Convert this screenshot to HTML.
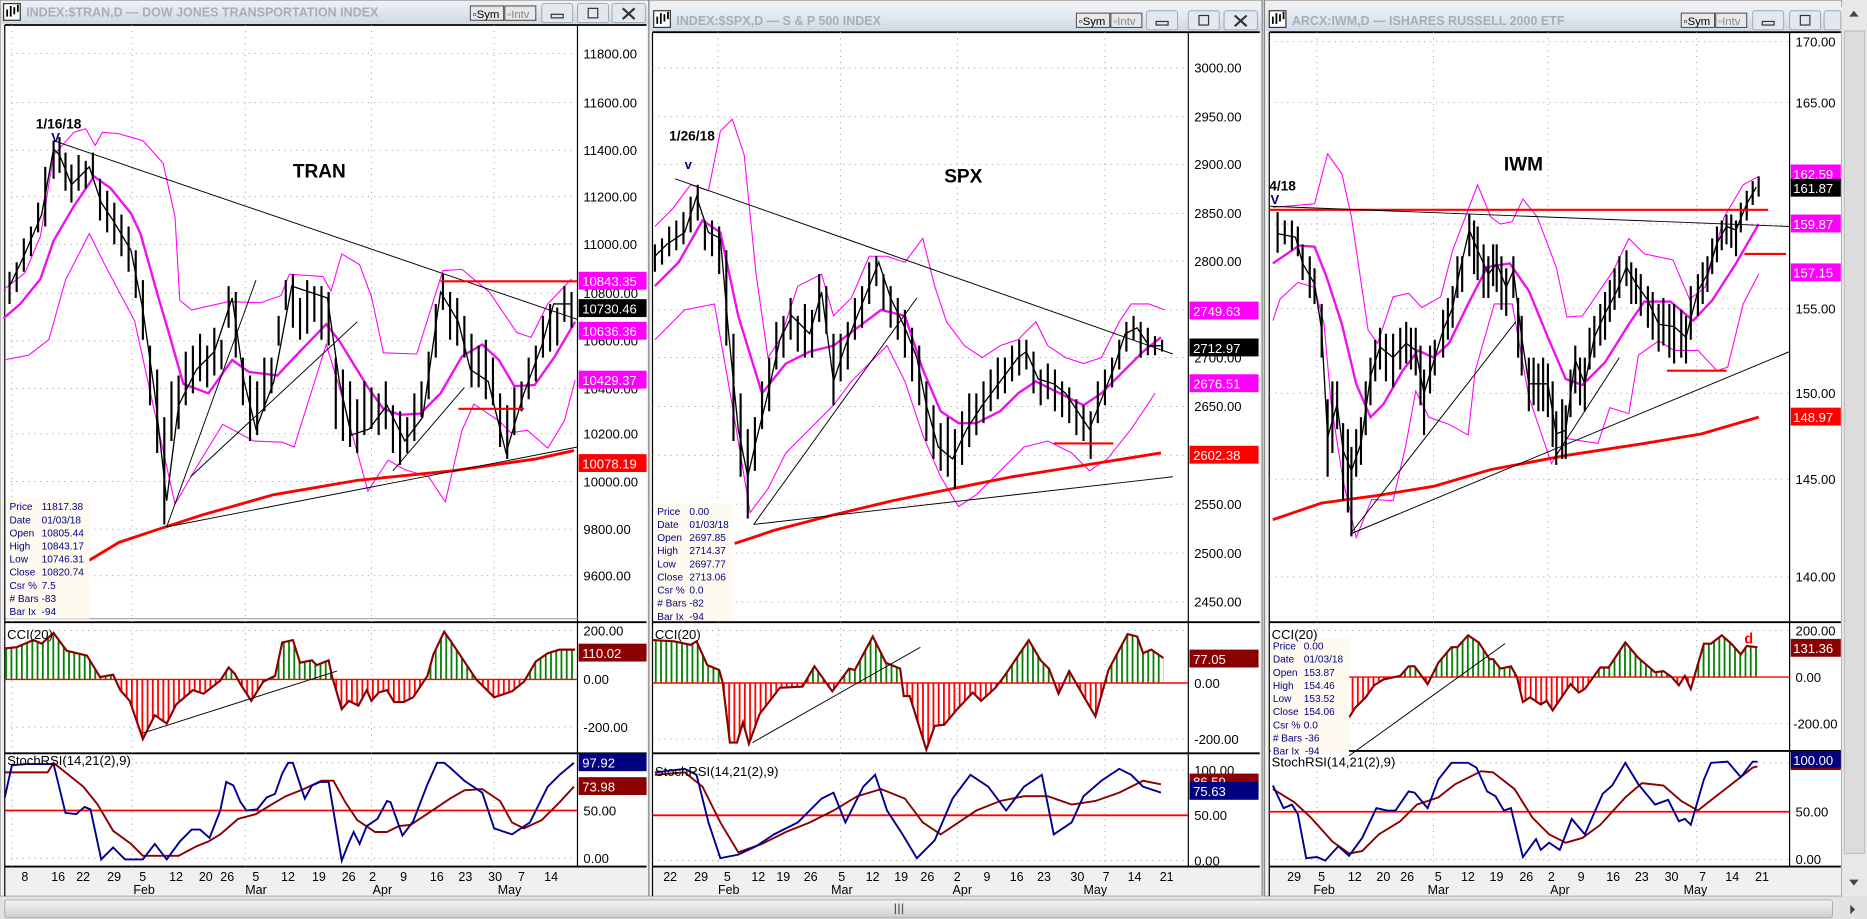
<!DOCTYPE html>
<html><head><meta charset="utf-8"><style>
html,body{margin:0;padding:0;background:#d4d0c8;overflow:hidden}
svg{display:block}
text{font-family:"Liberation Sans",sans-serif}
.ax{font-size:11px;fill:#000}
.bx{font-size:11px;fill:#fff}
.dt{font-size:10.5px;fill:#000}
.inf{font-size:8.5px;fill:#000080}
.ttl{font-size:10.5px;fill:#a8aeb6;font-weight:bold}
.grid{stroke:#9a9a9a;stroke-width:.7;stroke-dasharray:1 4;fill:none}
.bar{stroke:#000;stroke-width:1.8;fill:none}
.px{stroke:#000;stroke-width:1.1;fill:none}
.bandt{stroke:#ff00ff;stroke-width:.9;fill:none}
.bandm{stroke:#ee11ee;stroke-width:2;fill:none}
.ma{stroke:#ff0000;stroke-width:2.4;fill:none}
.tl{stroke:#000;stroke-width:.8;fill:none}
.rl{stroke:#ff0000;stroke-width:1.8;fill:none}
.cci{stroke:#8b0000;stroke-width:1.8;fill:none}
.sb{stroke:#000090;stroke-width:1.6;fill:none}
.sr{stroke:#8b0000;stroke-width:1.6;fill:none}
</style></head><body>
<svg width="1867" height="919" viewBox="0 0 1568 771" preserveAspectRatio="none" xmlns="http://www.w3.org/2000/svg">
<defs>
<pattern id="pg" width="4.4" height="10" patternUnits="userSpaceOnUse"><rect x="0" y="0" width="1.5" height="10" fill="#008000"/></pattern>
<pattern id="pr" width="4.4" height="10" patternUnits="userSpaceOnUse"><rect x="0" y="0" width="1.5" height="10" fill="#ff0000"/></pattern>
<linearGradient id="tb" x1="0" y1="0" x2="0" y2="1"><stop offset="0" stop-color="#eef2f7"/><stop offset="1" stop-color="#cfd8e3"/></linearGradient>
<linearGradient id="hs" x1="0" y1="0" x2="0" y2="1"><stop offset="0" stop-color="#f4f4f4"/><stop offset="1" stop-color="#cfcfcf"/></linearGradient>
<clipPath id="a1"><rect x="4" y="524" width="481" height="46"/></clipPath>
<clipPath id="b1"><rect x="4" y="570" width="481" height="62"/></clipPath>
<clipPath id="a2"><rect x="548" y="524" width="450" height="49"/></clipPath>
<clipPath id="b2"><rect x="548" y="573" width="450" height="60"/></clipPath>
<clipPath id="a3"><rect x="1066" y="524" width="437" height="44"/></clipPath>
<clipPath id="b3"><rect x="1066" y="568" width="437" height="62"/></clipPath>
</defs>
<rect x="0" y="0" width="1568" height="771" fill="#d4d0c8"/>

<!-- ============ PANEL 1 ============ -->
<rect x="0" y="0" width="545" height="752" fill="#f0f0f0" stroke="#888" stroke-width="1"/>
<rect x="1" y="1" width="543" height="19" fill="url(#tb)"/>
<rect x="3" y="3" width="14" height="14" fill="#fff" stroke="#333" stroke-width="1"/>
<path d="M6 14V8M9 14V5M12 12V6M15 10V4" stroke="#000" stroke-width="1.5"/>
<text x="22" y="14" class="ttl">INDEX:$TRAN,D — DOW JONES TRANSPORTATION INDEX</text>
<rect x="395" y="5" width="28" height="12" fill="#e8e8e8" stroke="#444" stroke-width=".8"/><text x="397" y="15" font-size="9.5">▫Sym</text>
<rect x="424" y="5" width="26" height="12" fill="#e8e8e8" stroke="#444" stroke-width=".8"/><text x="426" y="15" font-size="9.5" fill="#888">▫Intv</text>
<rect x="455" y="3" width="26" height="16" fill="#e4e8ee" stroke="#9aa" stroke-width=".8" rx="2"/><rect x="463" y="12" width="10" height="3" fill="none" stroke="#333"/>
<rect x="485" y="3" width="26" height="16" fill="#e4e8ee" stroke="#9aa" stroke-width=".8" rx="2"/><rect x="494" y="7" width="8" height="8" fill="none" stroke="#333"/>
<rect x="514" y="3" width="28" height="16" fill="#e4e8ee" stroke="#9aa" stroke-width=".8" rx="2"/><path d="M523 7L533 16M533 7L523 16" stroke="#333" stroke-width="1.8"/>
<rect x="4" y="21" width="539" height="706" fill="#fff"/>
<line x1="4" y1="21" x2="543" y2="21" stroke="#000" stroke-width="1.5"/>
<line x1="485" y1="21" x2="485" y2="727" stroke="#000" stroke-width="1"/>
<line x1="4" y1="522" x2="543" y2="522" stroke="#000" stroke-width="1.5"/><line x1="4" y1="519" x2="485" y2="519" stroke="#aaa" stroke-width="1"/>
<line x1="4" y1="632" x2="543" y2="632" stroke="#000" stroke-width="1.5"/>
<line x1="4" y1="727" x2="543" y2="727" stroke="#000" stroke-width="1.5"/>
<line x1="4" y1="21" x2="4" y2="752" stroke="#000" stroke-width="1"/>
<g class="grid">
<path d="M4 45H485M4 86H485M4 126H485M4 165H485M4 205H485M4 246H485M4 286H485M4 326H485M4 364H485M4 404H485M4 444H485M4 483H485"/>
<path d="M4 529H485M4 570H485M4 610H485M4 640H485M4 720H485"/>
<path d="M10 21V727M111 21V727M206 21V727M312 21V727M415 21V727"/>
</g>
<g class="ax"><text x="490" y="49">11800.00</text><text x="490" y="90">11600.00</text><text x="490" y="130">11400.00</text><text x="490" y="169">11200.00</text><text x="490" y="209">11000.00</text><text x="490" y="250">10800.00</text><text x="490" y="290">10600.00</text><text x="490" y="330">10400.00</text><text x="490" y="368">10200.00</text><text x="490" y="408">10000.00</text><text x="490" y="448">9800.00</text><text x="490" y="487">9600.00</text></g>
<rect x="486" y="228" width="57" height="15" fill="#ff00ff"/><text x="489" y="240" class="bx">10843.35</text>
<rect x="486" y="251" width="57" height="15" fill="#000"/><text x="489" y="263" class="bx">10730.46</text>
<rect x="486" y="270" width="57" height="15" fill="#ff00ff"/><text x="489" y="282" class="bx">10636.36</text>
<rect x="486" y="311" width="57" height="15" fill="#ff00ff"/><text x="489" y="323" class="bx">10429.37</text>
<rect x="486" y="381" width="57" height="15" fill="#ff0000"/><text x="489" y="393" class="bx">10078.19</text>
<!-- bands -->
<polyline class="bandt" points="3,243 21,229 34,198 45,130 62,111 72,108 80,122 86,111 99,112 120,118 137,137 147,182 151,252 161,260 192,253 219,254 236,248 243,230 271,232 278,244 287,213 302,222 312,249 322,296 350,297 372,227 388,226 411,245 434,279 446,283 460,255 480,234"/>
<polyline class="bandt" points="3,302 24,298 41,285 55,235 75,196 89,224 113,269 137,378 147,423 165,392 187,356 213,370 237,371 247,375 274,289 285,325 309,412 326,386 340,394 360,400 374,421 388,361 398,339 419,353 429,363 443,361 460,376 474,353 483,319"/>
<polyline class="bandm" points="3,267 17,255 34,234 45,202 62,173 79,148 93,158 110,179 118,196 132,246 142,280 154,322 175,330 185,316 195,302 209,312 233,315 247,300 274,272 285,286 309,325 322,343 336,348 353,347 370,330 388,299 405,289 419,302 432,324 449,323 466,299 483,270"/>
<polyline class="ma" points="75,470 100,455 130,445 170,432 230,415 300,403 380,395 450,385 482,378"/>
<!-- price -->
<polyline class="px" points="8,240 20,215 35,180 45,125 50,130 60,155 75,140 85,170 95,185 110,210 120,260 130,330 140,420 150,340 165,310 180,295 195,250 205,320 215,360 230,320 245,240 260,245 275,250 285,320 295,365 310,360 325,340 340,370 355,350 370,245 385,270 395,310 410,320 425,380 440,330 455,290 465,255 480,255"/>
<path class="bar" d="M8 228V255M14 220V245M20 200V228M26 190V215M32 170V195M38 140V190M45 118V150M50 115V145M55 128V160M60 138V170M66 130V160M72 135V158M78 128V150M84 150V185M90 160V195M96 170V205M102 180V215M108 190V228M114 210V250M120 235V285M126 290V340M132 310V380M138 350V440M144 320V370M150 315V360M156 295V340M162 290V330M168 280V320M174 290V325M180 275V315M186 285V310M192 240V275M198 245V300M204 300V340M210 315V370M216 320V365M222 300V345M228 300V330M234 265V290M240 235V260M246 230V275M252 250V285M258 235V280M264 240V270M270 240V285M276 245V290M282 300V360M288 310V370M294 320V375M300 335V380M306 320V365M312 325V360M318 330V365M324 320V360M330 340V380M336 345V390M342 350V380M348 330V370M354 320V350M360 295V335M366 255V300M372 230V260M378 245V285M384 250V290M390 265V300M396 280V325M402 290V325M408 285V335M414 300V340M420 330V375M426 340V385M432 325V365M438 320V345M444 300V335M450 290V320M456 265V300M462 255V295M468 258V290M474 240V270M480 245V275"/>
<!-- trendlines -->
<line class="tl" x1="45" y1="118" x2="485" y2="268"/>
<line class="tl" x1="140" y1="442" x2="485" y2="375"/>
<line class="tl" x1="140" y1="442" x2="215" y2="235"/>
<line class="tl" x1="160" y1="400" x2="300" y2="270"/>
<line class="tl" x1="330" y1="395" x2="390" y2="325"/>
<line class="rl" x1="370" y1="236" x2="485" y2="236"/>
<line class="rl" x1="385" y1="343" x2="440" y2="343"/>
<text x="30" y="108" font-size="11.5" font-weight="bold">1/16/18</text>
<text x="43" y="119" font-size="11" font-weight="bold" fill="#000080">V</text>
<text x="246" y="149" font-size="16" font-weight="bold">TRAN</text>
<rect x="5" y="418" width="70" height="101" fill="#fffaf0"/>
<g class="inf"><text x="8" y="428">Price</text><text x="35" y="428">11817.38</text><text x="8" y="439">Date</text><text x="35" y="439">01/03/18</text><text x="8" y="450">Open</text><text x="35" y="450">10805.44</text><text x="8" y="461">High</text><text x="35" y="461">10843.17</text><text x="8" y="472">Low</text><text x="35" y="472">10746.31</text><text x="8" y="483">Close</text><text x="35" y="483">10820.74</text><text x="8" y="494">Csr %</text><text x="35" y="494">7.5</text><text x="8" y="505">#&#160;Bars -83</text><text x="8" y="516">Bar Ix&#160; -94</text></g>
<!-- CCI 1 -->
<g>
<polygon clip-path="url(#a1)" fill="url(#pg)" points="4,570 4,544 14,543 28,537 35,540 45,531 56,546 73,550 84,568 95,566 101,579 109,588 120,620 130,600 140,607 148,591 162,579 171,582 185,571 192,560 197,565 202,574 211,588 221,572 231,567 237,539 246,537 252,556 262,554 266,558 276,554 279,568 287,595 293,588 301,592 308,579 312,588 318,581 325,579 331,589 339,589 347,585 359,567 364,549 373,530 378,537 390,555 400,570 415,585 430,580 440,572 450,555 460,548 470,545 483,545 483,570"/>
<polygon clip-path="url(#b1)" fill="url(#pr)" points="4,570 4,544 14,543 28,537 35,540 45,531 56,546 73,550 84,568 95,566 101,579 109,588 120,620 130,600 140,607 148,591 162,579 171,582 185,571 192,560 197,565 202,574 211,588 221,572 231,567 237,539 246,537 252,556 262,554 266,558 276,554 279,568 287,595 293,588 301,592 308,579 312,588 318,581 325,579 331,589 339,589 347,585 359,567 364,549 373,530 378,537 390,555 400,570 415,585 430,580 440,572 450,555 460,548 470,545 483,545 483,570"/>
<line x1="4" y1="570" x2="485" y2="570" stroke="#ff0000" stroke-width="1.2"/>
<polyline class="cci" points="4,544 14,543 28,537 35,540 45,531 56,546 73,550 84,568 95,566 101,579 109,588 120,620 130,600 140,607 148,591 162,579 171,582 185,571 192,560 197,565 202,574 211,588 221,572 231,567 237,539 246,537 252,556 262,554 266,558 276,554 279,568 287,595 293,588 301,592 308,579 312,588 318,581 325,579 331,589 339,589 347,585 359,567 364,549 373,530 378,537 390,555 400,570 415,585 430,580 440,572 450,555 460,548 470,545 483,545"/>
<line class="tl" x1="120" y1="615" x2="283" y2="563"/>
</g>
<text x="6" y="536" font-size="11">CCI(20)</text>
<g class="ax"><text x="490" y="533">200.00</text><text x="490" y="574">0.00</text><text x="490" y="614">-200.00</text></g>
<rect x="486" y="540" width="57" height="15" fill="#8b0000"/><text x="489" y="552" class="bx">110.02</text>
<!-- Stoch 1 -->
<line x1="4" y1="680" x2="485" y2="680" stroke="#ff0000" stroke-width="1.5"/>
<polyline class="sr" points="4,648 40,648 45,640 55,648 70,660 82,675 95,697 110,708 120,718 135,718 150,718 165,710 175,706 185,700 200,687 215,683 228,675 240,668 255,662 270,655 280,655 290,673 300,688 315,698 325,698 335,693 345,692 360,682 378,670 390,663 405,662 420,672 430,690 440,695 455,688 470,673 482,660"/>
<polyline class="sb" points="4,669 10,642 22,641 45,641 55,682 64,683 71,677 76,679 85,721 95,711 105,721 120,721 130,708 140,721 151,706 161,696 168,696 176,703 185,680 190,656 196,659 202,673 207,680 216,679 224,669 231,666 237,649 242,640 246,640 256,670 262,659 269,656 276,656 280,680 287,722 293,707 297,698 302,708 308,693 317,687 325,672 328,673 338,701 347,689 359,658 367,640 373,640 378,644 390,655 405,665 415,695 430,700 445,690 460,660 470,650 482,640"/>
<text x="6" y="642" font-size="11">StochRSI(14,21(2),9)</text>
<rect x="486" y="632" width="57" height="15" fill="#000080"/><text x="489" y="644" class="bx">97.92</text>
<rect x="486" y="652" width="57" height="15" fill="#8b0000"/><text x="489" y="664" class="bx">73.98</text>
<g class="ax"><text x="490" y="684">50.00</text><text x="490" y="724">0.00</text></g>
<g class="dt"><text x="18" y="739">8</text><text x="43" y="739">16</text><text x="64" y="739">22</text><text x="90" y="739">29</text><text x="117" y="739">5</text><text x="142" y="739">12</text><text x="167" y="739">20</text><text x="185" y="739">26</text><text x="212" y="739">5</text><text x="236" y="739">12</text><text x="262" y="739">19</text><text x="287" y="739">26</text><text x="310" y="739">2</text><text x="336" y="739">9</text><text x="361" y="739">16</text><text x="385" y="739">23</text><text x="410" y="739">30</text><text x="435" y="739">7</text><text x="457" y="739">14</text>
<text x="112" y="750">Feb</text><text x="206" y="750">Mar</text><text x="313" y="750">Apr</text><text x="418" y="750">May</text></g>

<!-- ============ PANEL 2 ============ -->
<rect x="545" y="0" width="515" height="752" fill="#f0f0f0" stroke="#888" stroke-width="1"/>
<rect x="546" y="6" width="513" height="20" fill="url(#tb)"/>
<rect x="549" y="9" width="14" height="14" fill="#fff" stroke="#333" stroke-width="1"/>
<path d="M552 20V14M555 20V11M558 18V12M561 16V10" stroke="#000" stroke-width="1.5"/>
<text x="568" y="21" class="ttl">INDEX:$SPX,D — S &amp; P 500 INDEX</text>
<rect x="904" y="11" width="28" height="12" fill="#e8e8e8" stroke="#444" stroke-width=".8"/><text x="906" y="21" font-size="9.5">▫Sym</text>
<rect x="933" y="11" width="26" height="12" fill="#e8e8e8" stroke="#444" stroke-width=".8"/><text x="935" y="21" font-size="9.5" fill="#888">▫Intv</text>
<rect x="963" y="9" width="26" height="16" fill="#e4e8ee" stroke="#9aa" stroke-width=".8" rx="2"/><rect x="971" y="18" width="10" height="3" fill="none" stroke="#333"/>
<rect x="998" y="9" width="26" height="16" fill="#e4e8ee" stroke="#9aa" stroke-width=".8" rx="2"/><rect x="1007" y="13" width="8" height="8" fill="none" stroke="#333"/>
<rect x="1028" y="9" width="28" height="16" fill="#e4e8ee" stroke="#9aa" stroke-width=".8" rx="2"/><path d="M1037 13L1047 22M1047 13L1037 22" stroke="#333" stroke-width="1.8"/>
<rect x="548" y="27" width="510" height="700" fill="#fff"/>
<line x1="548" y1="27" x2="1058" y2="27" stroke="#000" stroke-width="1.5"/>
<line x1="998" y1="27" x2="998" y2="727" stroke="#000" stroke-width="1"/>
<line x1="548" y1="522" x2="1058" y2="522" stroke="#000" stroke-width="1.5"/>
<line x1="548" y1="632" x2="1058" y2="632" stroke="#000" stroke-width="1.5"/>
<line x1="548" y1="727" x2="1058" y2="727" stroke="#000" stroke-width="1.5"/>
<line x1="548" y1="27" x2="548" y2="752" stroke="#000" stroke-width="1"/>
<g class="grid">
<path d="M548 57H998M548 98H998M548 138H998M548 179H998M548 219H998M548 260H998M548 300H998M548 341H998M548 382H998M548 423H998M548 464H998M548 505H998"/>
<path d="M548 529H998M548 573H998M548 620H998M548 646H998M548 684H998M548 722H998"/>
<path d="M603 27V727M706 27V727M804 27V727M928 27V727"/>
</g>
<g class="ax"><text x="1003" y="61">3000.00</text><text x="1003" y="102">2950.00</text><text x="1003" y="142">2900.00</text><text x="1003" y="183">2850.00</text><text x="1003" y="223">2800.00</text><text x="1003" y="304">2700.00</text><text x="1003" y="345">2650.00</text><text x="1003" y="427">2550.00</text><text x="1003" y="468">2500.00</text><text x="1003" y="509">2450.00</text></g>
<rect x="999" y="253" width="58" height="15" fill="#ff00ff"/><text x="1002" y="265" class="bx">2749.63</text>
<rect x="999" y="284" width="58" height="15" fill="#000"/><text x="1002" y="296" class="bx">2712.97</text>
<rect x="999" y="314" width="58" height="15" fill="#ff00ff"/><text x="1002" y="326" class="bx">2676.51</text>
<rect x="999" y="374" width="58" height="15" fill="#ff0000"/><text x="1002" y="386" class="bx">2602.38</text>
<polyline class="bandt" points="550,190 565,175 580,155 595,160 605,110 615,100 625,130 635,230 645,300 655,285 670,240 690,230 700,265 715,250 730,215 745,215 760,220 775,200 785,240 795,270 810,290 825,300 840,290 855,285 870,270 880,290 895,300 910,305 925,300 940,270 950,255 965,255 978,260"/>
<polyline class="bandt" points="550,285 575,260 600,255 615,340 630,430 645,410 660,380 680,360 700,340 715,320 730,305 745,290 760,320 775,365 790,400 805,425 820,415 840,395 860,375 880,370 900,380 915,395 930,385 950,360 970,330"/>
<polyline class="bandm" points="550,240 570,220 590,185 605,195 620,265 640,330 660,305 680,295 700,290 720,275 740,260 760,265 775,310 790,345 805,355 820,355 840,345 855,330 870,320 890,330 910,340 925,330 945,310 960,295 975,283"/>
<polyline class="ma" points="617,456 650,445 700,432 750,420 800,410 850,400 900,392 950,384 975,380"/>
<polyline class="px" points="550,215 560,205 575,195 585,165 595,195 605,200 612,280 620,360 628,400 635,370 645,330 655,285 665,265 680,280 690,245 700,320 710,290 720,265 730,240 738,220 748,250 760,275 770,300 778,340 788,375 800,385 812,360 825,340 840,320 855,300 862,295 872,318 885,322 895,330 905,345 915,360 925,335 935,310 945,280 955,275 965,290 975,290"/>
<path class="bar" d="M550 205V228M556 200V222M562 190V215M568 185V210M574 178V205M580 165V195M586 155V185M592 185V210M598 185V215M604 190V230M610 210V290M616 280V370M622 330V400M628 360V435M634 350V395M640 320V360M646 300V345M652 270V310M658 265V300M664 250V285M670 265V295M676 255V300M682 260V300M688 230V270M694 240V280M700 280V340M706 280V320M712 270V310M718 250V285M724 240V275M730 220V255M736 215V240M742 230V260M748 240V275M754 250V285M760 260V300M766 275V320M772 290V340M778 320V370M784 340V385M790 355V395M796 350V400M802 360V410M808 345V390M814 330V375M820 330V365M826 320V355M832 310V345M838 300V335M844 300V330M850 290V320M856 285V315M862 285V310M868 295V330M874 310V340M880 305V335M886 310V345M892 320V350M898 325V355M904 335V365M910 340V370M916 345V385M922 320V355M928 310V340M934 300V325M940 285V310M946 270V295M952 265V285M958 270V300M964 275V298M970 282V298M976 285V295"/>
<line class="tl" x1="567" y1="150" x2="985" y2="297"/>
<line class="tl" x1="633" y1="440" x2="985" y2="400"/>
<line class="tl" x1="633" y1="440" x2="770" y2="250"/>
<line class="rl" x1="885" y1="372" x2="935" y2="372"/>
<text x="562" y="118" font-size="11.5" font-weight="bold">1/26/18</text>
<text x="575" y="142" font-size="11" font-weight="bold" fill="#000080">v</text>
<text x="793" y="153" font-size="16" font-weight="bold">SPX</text>
<rect x="549" y="422" width="66" height="99" fill="#fffaf0"/>
<g class="inf"><text x="552" y="432">Price</text><text x="579" y="432">0.00</text><text x="552" y="443">Date</text><text x="579" y="443">01/03/18</text><text x="552" y="454">Open</text><text x="579" y="454">2697.85</text><text x="552" y="465">High</text><text x="579" y="465">2714.37</text><text x="552" y="476">Low</text><text x="579" y="476">2697.77</text><text x="552" y="487">Close</text><text x="579" y="487">2713.06</text><text x="552" y="498">Csr %</text><text x="579" y="498">0.0</text><text x="552" y="509">#&#160;Bars -82</text><text x="552" y="520">Bar Ix&#160; -94</text></g>
<g>
<polygon clip-path="url(#a2)" fill="url(#pg)" points="548,573 548,537 566,538 580,541 585,538 594,558 604,562 607,573 613,623 619,623 624,606 629,624 638,599 655,577 674,576 684,559 699,580 713,561 718,562 733,534 744,556 756,561 759,584 764,584 778,629 785,609 793,608 803,596 817,581 824,588 836,577 843,568 864,537 874,554 881,561 889,582 898,563 910,584 920,601 931,562 947,532 955,534 960,548 967,545 977,552 977,573"/>
<polygon clip-path="url(#b2)" fill="url(#pr)" points="548,573 548,537 566,538 580,541 585,538 594,558 604,562 607,573 613,623 619,623 624,606 629,624 638,599 655,577 674,576 684,559 699,580 713,561 718,562 733,534 744,556 756,561 759,584 764,584 778,629 785,609 793,608 803,596 817,581 824,588 836,577 843,568 864,537 874,554 881,561 889,582 898,563 910,584 920,601 931,562 947,532 955,534 960,548 967,545 977,552 977,573"/>
<line x1="548" y1="573" x2="998" y2="573" stroke="#ff0000" stroke-width="1.2"/>
<polyline class="cci" points="548,537 566,538 580,541 585,538 594,558 604,562 607,573 613,623 619,623 624,606 629,624 638,599 655,577 674,576 684,559 699,580 713,561 718,562 733,534 744,556 756,561 759,584 764,584 778,629 785,609 793,608 803,596 817,581 824,588 836,577 843,568 864,537 874,554 881,561 889,582 898,563 910,584 920,601 931,562 947,532 955,534 960,548 967,545 977,552"/>
<line class="tl" x1="632" y1="623" x2="773" y2="543"/>
</g>
<text x="550" y="536" font-size="11">CCI(20)</text>
<g class="ax"><text x="1003" y="577">0.00</text><text x="1003" y="624">-200.00</text></g>
<rect x="999" y="545" width="58" height="15" fill="#8b0000"/><text x="1002" y="557" class="bx">77.05</text>
<line x1="548" y1="684" x2="998" y2="684" stroke="#ff0000" stroke-width="1.5"/>
<polyline class="sr" points="550,650 575,648 590,660 605,690 620,715 640,708 660,698 680,690 700,680 720,668 740,662 760,670 775,690 790,700 805,690 820,680 840,672 860,668 880,668 900,675 920,672 940,665 960,655 975,658"/>
<polyline class="sb" points="550,648 575,645 585,650 595,690 605,720 620,717 635,710 650,700 670,690 690,670 700,665 710,690 725,660 735,650 745,680 758,700 770,720 785,705 800,670 815,650 830,660 845,680 860,660 875,650 885,700 900,690 910,668 925,655 940,645 950,650 960,660 975,665"/>
<text x="550" y="651" font-size="11">StochRSI(14,21(2),9)</text>
<text x="1003" y="650" class="ax">100.00</text>
<rect x="999" y="649" width="58" height="13" fill="#8b0000"/><text x="1002" y="660" class="bx">86.59</text>
<rect x="999" y="656" width="58" height="15" fill="#000080"/><text x="1002" y="668" class="bx">75.63</text>
<g class="ax"><text x="1003" y="688">50.00</text><text x="1003" y="726">0.00</text></g>
<g class="dt"><text x="557" y="739">22</text><text x="583" y="739">29</text><text x="608" y="739">5</text><text x="631" y="739">12</text><text x="652" y="739">19</text><text x="675" y="739">26</text><text x="704" y="739">5</text><text x="727" y="739">12</text><text x="751" y="739">19</text><text x="773" y="739">26</text><text x="801" y="739">2</text><text x="826" y="739">9</text><text x="848" y="739">16</text><text x="871" y="739">23</text><text x="899" y="739">30</text><text x="926" y="739">7</text><text x="947" y="739">14</text><text x="974" y="739">21</text>
<text x="603" y="750">Feb</text><text x="698" y="750">Mar</text><text x="800" y="750">Apr</text><text x="910" y="750">May</text></g>

<!-- ============ PANEL 3 ============ -->
<rect x="1062" y="0" width="485" height="752" fill="#f0f0f0" stroke="#888" stroke-width="1"/>
<rect x="1063" y="6" width="484" height="20" fill="url(#tb)"/>
<rect x="1066" y="9" width="14" height="14" fill="#fff" stroke="#333" stroke-width="1"/>
<path d="M1069 20V14M1072 20V11M1075 18V12M1078 16V10" stroke="#000" stroke-width="1.5"/>
<text x="1085" y="21" class="ttl">ARCX:IWM,D — ISHARES RUSSELL 2000 ETF</text>
<rect x="1412" y="11" width="28" height="12" fill="#e8e8e8" stroke="#444" stroke-width=".8"/><text x="1414" y="21" font-size="9.5">▫Sym</text>
<rect x="1441" y="11" width="26" height="12" fill="#e8e8e8" stroke="#444" stroke-width=".8"/><text x="1443" y="21" font-size="9.5" fill="#888">▫Intv</text>
<rect x="1472" y="9" width="26" height="16" fill="#e4e8ee" stroke="#9aa" stroke-width=".8" rx="2"/><rect x="1480" y="18" width="10" height="3" fill="none" stroke="#333"/>
<rect x="1503" y="9" width="26" height="16" fill="#e4e8ee" stroke="#9aa" stroke-width=".8" rx="2"/><rect x="1512" y="13" width="8" height="8" fill="none" stroke="#333"/>
<rect x="1532" y="9" width="14" height="16" fill="#e4e8ee" stroke="#9aa" stroke-width=".8" rx="2"/>
<rect x="1066" y="27" width="480" height="700" fill="#fff"/>
<line x1="1066" y1="27" x2="1546" y2="27" stroke="#000" stroke-width="1.5"/>
<line x1="1503" y1="27" x2="1503" y2="727" stroke="#000" stroke-width="1"/>
<line x1="1066" y1="522" x2="1546" y2="522" stroke="#000" stroke-width="1.5"/>
<line x1="1066" y1="630" x2="1546" y2="630" stroke="#000" stroke-width="1.5"/>
<line x1="1066" y1="727" x2="1546" y2="727" stroke="#000" stroke-width="1.5"/>
<line x1="1066" y1="27" x2="1066" y2="752" stroke="#000" stroke-width="1"/>
<g class="grid">
<path d="M1066 35H1503M1066 86H1503M1066 188H1503M1066 259H1503M1066 330H1503M1066 402H1503M1066 484H1503"/>
<path d="M1066 529H1503M1066 568H1503M1066 607H1503M1066 640H1503M1066 681H1503M1066 721H1503"/>
<path d="M1106 27V727M1204 27V727M1300 27V727M1425 27V727"/>
</g>
<g class="ax"><text x="1508" y="39">170.00</text><text x="1508" y="90">165.00</text><text x="1508" y="263">155.00</text><text x="1508" y="334">150.00</text><text x="1508" y="406">145.00</text><text x="1508" y="488">140.00</text></g>
<rect x="1504" y="138" width="42" height="15" fill="#ff00ff"/><text x="1506" y="150" class="bx">162.59</text>
<rect x="1504" y="150" width="42" height="15" fill="#000"/><text x="1506" y="162" class="bx">161.87</text>
<rect x="1504" y="180" width="42" height="15" fill="#ff00ff"/><text x="1506" y="192" class="bx">159.87</text>
<rect x="1504" y="221" width="42" height="15" fill="#ff00ff"/><text x="1506" y="233" class="bx">157.15</text>
<rect x="1504" y="342" width="42" height="15" fill="#ff0000"/><text x="1506" y="354" class="bx">148.97</text>
<polyline class="bandt" points="1069,174 1104,171 1115,129 1127,146 1135,182 1149,277 1157,288 1170,249 1183,246 1194,258 1210,249 1220,210 1241,155 1252,182 1260,188 1270,186 1279,167 1291,182 1307,224 1316,266 1329,265 1342,246 1355,227 1368,200 1381,213 1405,218 1419,251 1432,241 1448,182 1464,155 1477,148"/>
<polyline class="bandt" points="1069,269 1075,251 1090,237 1104,241 1112,272 1118,339 1128,403 1139,451 1152,419 1170,420 1181,372 1189,328 1200,350 1217,356 1233,365 1239,311 1255,255 1270,255 1284,333 1303,389 1316,368 1342,372 1352,342 1368,347 1376,298 1393,286 1406,294 1426,294 1442,311 1451,308 1464,255 1477,230"/>
<polyline class="bandm" points="1069,221 1091,206 1104,207 1114,232 1127,272 1139,322 1151,350 1162,339 1178,311 1191,294 1204,300 1217,288 1233,255 1249,224 1268,221 1284,244 1300,283 1315,318 1329,323 1348,304 1368,272 1381,253 1403,253 1422,269 1438,252 1458,221 1477,188"/>
<polyline class="ma" points="1069,436 1110,422 1155,416 1204,408 1252,394 1316,382 1381,372 1429,364 1477,350"/>
<polyline class="px" points="1073,196 1088,199 1094,221 1104,238 1110,277 1115,367 1123,339 1128,378 1135,395 1143,372 1151,316 1159,291 1170,300 1181,288 1189,294 1196,330 1205,300 1212,277 1220,258 1226,227 1234,193 1241,210 1250,230 1257,221 1265,241 1271,227 1278,283 1284,322 1292,322 1300,322 1307,364 1315,361 1323,302 1331,322 1339,283 1348,263 1358,244 1366,224 1374,238 1384,252 1393,272 1406,274 1416,283 1426,244 1434,230 1442,204 1450,190 1458,193 1467,171 1475,157"/>
<path class="bar" d="M1073 178V212M1079 185V205M1085 185V210M1090 190V215M1094 205V235M1100 215V250M1104 225V255M1110 255V300M1115 335V400M1119 320V380M1123 320V360M1128 355V420M1132 360V430M1135 375V450M1139 360V400M1143 350V390M1147 320V365M1151 300V340M1155 285V320M1159 275V310M1164 280V320M1170 280V325M1176 275V310M1181 270V305M1185 275V310M1189 275V315M1193 290V340M1196 310V365M1201 290V330M1205 285V315M1212 260V300M1216 250V285M1220 240V275M1224 215V250M1228 215V245M1234 180V215M1238 185V230M1241 190V235M1246 205V250M1250 215V250M1254 205V240M1257 205V245M1261 215V260M1265 225V265M1271 215V250M1275 250V300M1278 265V315M1284 300V345M1288 300V340M1292 305V345M1296 300V345M1300 305V350M1304 320V375M1307 345V390M1312 335V385M1315 340V385M1319 310V350M1323 290V330M1327 300V340M1331 300V345M1335 275V310M1339 265V300M1344 255V290M1348 245V285M1352 235V270M1356 225V260M1360 215V250M1366 210V240M1370 220V255M1374 225V255M1378 230V265M1384 240V275M1388 245V285M1393 255V295M1397 250V290M1402 255V300M1406 255V305M1412 260V300M1416 265V305M1420 240V285M1426 230V265M1430 220V255M1434 215V245M1438 200V230M1442 190V220M1446 185V210M1450 180V205M1454 180V208M1458 185V215M1462 170V195M1467 160V185M1472 152V172M1477 148V165"/>
<line class="rl" x1="1066" y1="176" x2="1485" y2="176"/>
<line class="tl" x1="1066" y1="173" x2="1503" y2="190"/>
<line class="rl" x1="1465" y1="213" x2="1500" y2="213"/>
<line class="rl" x1="1400" y1="311" x2="1450" y2="311"/>
<line class="tl" x1="1134" y1="448" x2="1503" y2="295"/>
<line class="tl" x1="1134" y1="448" x2="1273" y2="270"/>
<line class="tl" x1="1305" y1="385" x2="1360" y2="300"/>
<text x="1066" y="160" font-size="11.5" font-weight="bold">4/18</text>
<text x="1067" y="171" font-size="11" font-weight="bold" fill="#000080">V</text>
<text x="1263" y="143" font-size="16" font-weight="bold">IWM</text>
<!-- CCI 3 -->
<g>
<polygon clip-path="url(#a3)" fill="url(#pg)" points="1133,568 1133,602 1138,594 1147,585 1154,575 1162,570 1176,567 1183,559 1188,559 1199,574 1208,556 1219,543 1224,543 1233,533 1242,539 1251,553 1254,553 1260,561 1269,559 1274,568 1279,589 1285,585 1294,591 1299,588 1304,596 1319,574 1326,581 1331,578 1344,560 1351,560 1365,539 1376,552 1390,564 1397,563 1404,568 1410,575 1415,567 1420,578 1431,540 1437,540 1446,533 1454,540 1462,549 1467,542 1476,543 1476,568"/>
<polygon clip-path="url(#b3)" fill="url(#pr)" points="1133,568 1133,602 1138,594 1147,585 1154,575 1162,570 1176,567 1183,559 1188,559 1199,574 1208,556 1219,543 1224,543 1233,533 1242,539 1251,553 1254,553 1260,561 1269,559 1274,568 1279,589 1285,585 1294,591 1299,588 1304,596 1319,574 1326,581 1331,578 1344,560 1351,560 1365,539 1376,552 1390,564 1397,563 1404,568 1410,575 1415,567 1420,578 1431,540 1437,540 1446,533 1454,540 1462,549 1467,542 1476,543 1476,568"/>
<line x1="1133" y1="568" x2="1503" y2="568" stroke="#ff0000" stroke-width="1.2"/>
<polyline class="cci" points="1133,602 1138,594 1147,585 1154,575 1162,570 1176,567 1183,559 1188,559 1199,574 1208,556 1219,543 1224,543 1233,533 1242,539 1251,553 1254,553 1260,561 1269,559 1274,568 1279,589 1285,585 1294,591 1299,588 1304,596 1319,574 1326,581 1331,578 1344,560 1351,560 1365,539 1376,552 1390,564 1397,563 1404,568 1410,575 1415,567 1420,578 1431,540 1437,540 1446,533 1454,540 1462,549 1467,542 1476,543"/>
<line class="tl" x1="1133" y1="634" x2="1264" y2="540"/>
</g>
<rect x="1067" y="535" width="66" height="96" fill="#fffaf0"/>
<text x="1068" y="536" font-size="11">CCI(20)</text>
<g class="inf"><text x="1069" y="545">Price</text><text x="1095" y="545">0.00</text><text x="1069" y="556">Date</text><text x="1095" y="556">01/03/18</text><text x="1069" y="567">Open</text><text x="1095" y="567">153.87</text><text x="1069" y="578">High</text><text x="1095" y="578">154.46</text><text x="1069" y="589">Low</text><text x="1095" y="589">153.52</text><text x="1069" y="600">Close</text><text x="1095" y="600">154.06</text><text x="1069" y="611">Csr %</text><text x="1095" y="611">0.0</text><text x="1069" y="622">#&#160;Bars -36</text><text x="1069" y="633">Bar Ix&#160; -94</text></g>
<text x="1465" y="540" font-size="12" font-weight="bold" fill="#ff0000">d</text>
<g class="ax"><text x="1508" y="533">200.00</text><text x="1508" y="572">0.00</text><text x="1506" y="611">-200.00</text></g>
<rect x="1504" y="536" width="42" height="15" fill="#8b0000"/><text x="1506" y="548" class="bx">131.36</text>
<line x1="1066" y1="681" x2="1503" y2="681" stroke="#ff0000" stroke-width="1.5"/>
<polyline class="sr" points="1069,662 1087,673 1101,686 1119,706 1133,716 1144,714 1158,700 1176,689 1190,675 1208,669 1222,658 1244,647 1254,648 1272,662 1287,686 1301,700 1315,707 1329,703 1344,692 1365,669 1379,657 1397,659 1412,672 1426,680 1440,669 1458,655 1472,644 1476,643"/>
<polyline class="sb" points="1069,659 1078,678 1085,675 1090,683 1097,720 1106,719 1113,722 1124,710 1133,718 1144,703 1156,678 1165,680 1172,680 1183,664 1188,665 1199,678 1208,654 1219,640 1233,640 1240,644 1249,664 1256,668 1263,680 1269,678 1279,719 1290,704 1294,713 1301,707 1310,713 1320,687 1331,700 1346,666 1354,659 1365,640 1376,658 1390,675 1401,671 1410,689 1415,687 1420,692 1431,654 1437,640 1451,639 1462,652 1472,639 1476,639"/>
<text x="1068" y="643" font-size="11">StochRSI(14,21(2),9)</text>
<rect x="1504" y="631" width="42" height="15" fill="#8b0000"/>
<rect x="1504" y="630" width="42" height="14" fill="#000080"/><text x="1506" y="642" class="bx">100.00</text>
<g class="ax"><text x="1508" y="685">50.00</text><text x="1508" y="725">0.00</text></g>
<g class="dt"><text x="1081" y="739">29</text><text x="1107" y="739">5</text><text x="1132" y="739">12</text><text x="1156" y="739">20</text><text x="1176" y="739">26</text><text x="1205" y="739">5</text><text x="1227" y="739">12</text><text x="1251" y="739">19</text><text x="1276" y="739">26</text><text x="1300" y="739">2</text><text x="1325" y="739">9</text><text x="1349" y="739">16</text><text x="1373" y="739">23</text><text x="1398" y="739">30</text><text x="1427" y="739">7</text><text x="1449" y="739">14</text><text x="1474" y="739">21</text>
<text x="1103" y="750">Feb</text><text x="1199" y="750">Mar</text><text x="1302" y="750">Apr</text><text x="1414" y="750">May</text></g>

<!-- right scrollbar -->
<rect x="1547" y="0" width="21" height="752" fill="#e8e8e8"/>
<rect x="1549" y="26" width="17" height="690" fill="#dcdcdc" stroke="#bbb" stroke-width=".8"/>
<path d="M1553 14L1557 9L1561 14Z" fill="#444"/>
<path d="M1553 738L1557 743L1561 738Z" fill="#444"/>
<!-- bottom scrollbar -->
<rect x="0" y="752" width="1568" height="19" fill="#e2e2e2"/>
<rect x="4" y="755" width="1535" height="15" fill="url(#hs)" stroke="#aaa" stroke-width=".8" rx="2"/>
<path d="M752 758V767M755 758V767M758 758V767" stroke="#555" stroke-width="1"/>
<path d="M1554 759L1558 763L1554 767Z" fill="#444"/>
</svg>
</body></html>
